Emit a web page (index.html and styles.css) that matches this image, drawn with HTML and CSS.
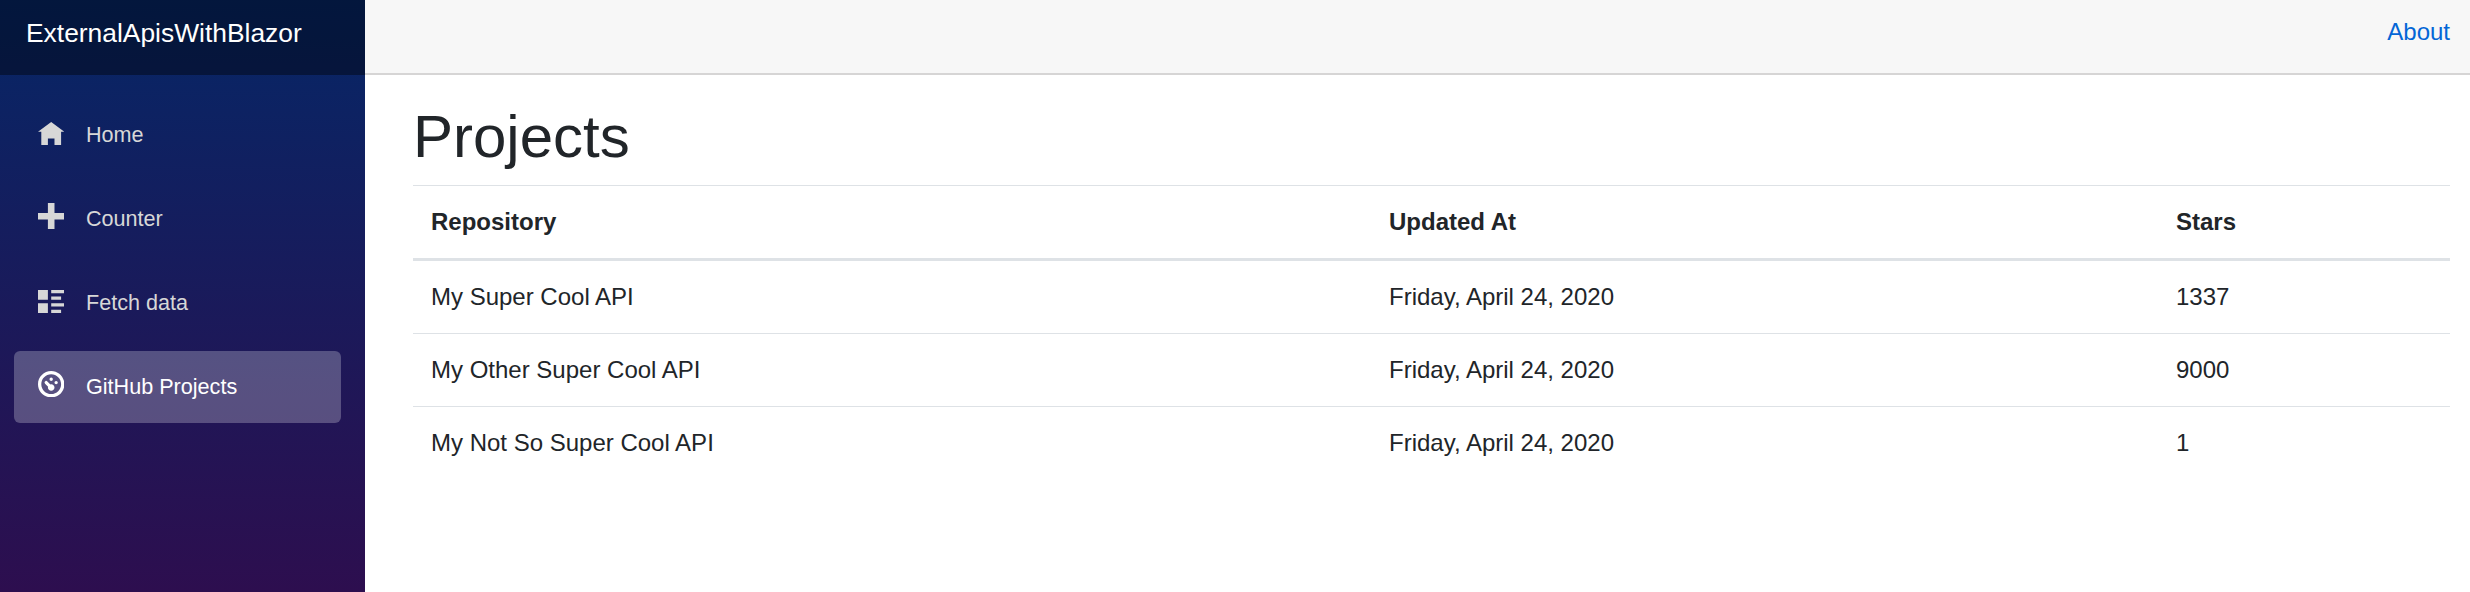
FILE: index.html
```html
<!DOCTYPE html>
<html lang="en">
<head>
<meta charset="utf-8">
<title>ExternalApisWithBlazor</title>
<link rel="stylesheet" href="styles.css">
</head>
<body>
<div class="app">
  <aside class="sidebar">
    <div class="brand-row"><a class="brand">ExternalApisWithBlazor</a></div>
    <nav class="nav">
      <a class="nav-link">
        <svg class="icon" viewBox="0 0 8 8"><path d="M4 .9l-4 3h1v4h2v-2h2v2h2v-4.03l1 .03-4-3z"/></svg>
        <span>Home</span>
      </a>
      <a class="nav-link">
        <svg class="icon" viewBox="0 0 8 8"><path d="M3 0v3h-3v2h3v3h2v-3h3v-2h-3v-3h-2z"/></svg>
        <span>Counter</span>
      </a>
      <a class="nav-link">
        <svg class="icon" viewBox="0 0 8 8"><path d="M0 .9v3h3v-3h-3zm4 0v1h4v-1h-4zm0 2v1h3v-1h-3zm-4 2v3h3v-3h-3zm4 0v1h4v-1h-4zm0 2v1h3v-1h-3z"/></svg>
        <span>Fetch data</span>
      </a>
      <a class="nav-link active">
        <svg class="icon" viewBox="0 0 8 8"><path d="M4 0c-2.2 0-4 1.8-4 4s1.8 4 4 4 4-1.8 4-4-1.8-4-4-4zm0 1c1.66 0 3 1.34 3 3s-1.34 3-3 3-3-1.34-3-3 1.34-3 3-3zm0 1c-.28 0-.5.22-.5.5s.22.5.5.5.5-.22.5-.5-.22-.5-.5-.5zm-1.66 1a.5.5 0 0 0-.19.84l.91.91c-.02.08-.06.16-.06.25 0 .55.45 1 1 1s1-.45 1-1-.45-1-1-1c-.09 0-.17.04-.25.06l-.91-.91a.5.5 0 0 0-.44-.16.5.5 0 0 0-.06 0zm3.16 0c-.28 0-.5.22-.5.5s.22.5.5.5.5-.22.5-.5-.22-.5-.5-.5z"/></svg>
        <span>GitHub Projects</span>
      </a>
    </nav>
  </aside>
  <main class="main">
    <header class="top-row"><a class="about">About</a></header>
    <section class="content">
      <h1 class="title">Projects</h1>
      <table class="table">
        <colgroup><col class="col-repo"><col class="col-date"><col></colgroup>
        <thead>
          <tr><th>Repository</th><th>Updated At</th><th>Stars</th></tr>
        </thead>
        <tbody>
          <tr><td>My Super Cool API</td><td>Friday, April 24, 2020</td><td>1337</td></tr>
          <tr><td>My Other Super Cool API</td><td>Friday, April 24, 2020</td><td>9000</td></tr>
          <tr><td>My Not So Super Cool API</td><td>Friday, April 24, 2020</td><td>1</td></tr>
        </tbody>
      </table>
    </section>
  </main>
</div>
</body>
</html>
```
FILE: styles.css
```css
* { box-sizing: border-box; }

body {
  margin: 0;
  font: 24px/36px "Liberation Sans", Arial, sans-serif;
  color: #212529;
  background: #fff;
}

.app {
  display: flex;
  height: 592px;
  overflow: hidden;
}

.sidebar {
  width: 365px;
  flex: none;
  background: linear-gradient(180deg, rgb(5, 39, 103) -9px, #3a0647 787px);
}

.brand-row {
  height: 75px;
  padding: 13px 0 0 26px;
  background: rgba(0, 0, 0, 0.4);
}

.brand {
  display: block;
  font-size: 26.4px;
  line-height: 40px;
  color: #fff;
}

.nav {
  display: flex;
  flex-direction: column;
  gap: 12px;
  padding: 24px 24px 0 14px;
}

.nav-link {
  display: flex;
  height: 72px;
  padding-left: 24px;
  border-radius: 6px;
  font-size: 21.6px;
  line-height: 72px;
  color: #d7d7d7;
}

.nav-link.active {
  background: rgba(255, 255, 255, 0.25);
  color: #fff;
}

.icon {
  flex: none;
  width: 26.4px;
  height: 26.4px;
  margin: 20px 21.6px 0 0;
  fill: currentColor;
}

.main {
  flex: 1;
  min-width: 0;
}

.top-row {
  display: flex;
  justify-content: flex-end;
  height: 75px;
  padding: 14px 20px 0 0;
  background: #f7f7f7;
  border-bottom: 2px solid #d6d5d5;
}

.about { color: #0366d6; }

.content { padding: 26px 20px 0 48px; }

.title {
  margin: 0 0 12px;
  font-size: 60px;
  font-weight: 500;
  line-height: 72px;
}

.table {
  width: 100%;
  table-layout: fixed;
  border-collapse: separate;
  border-spacing: 0;
}

.col-repo { width: 958px; }
.col-date { width: 787px; }

.table th,
.table td {
  padding: 18px;
  text-align: left;
  border-top: 1px solid #dee2e6;
}

.table th { border-bottom: 3px solid #dee2e6; }

.table tbody tr:first-child td { border-top: 0; }
```
